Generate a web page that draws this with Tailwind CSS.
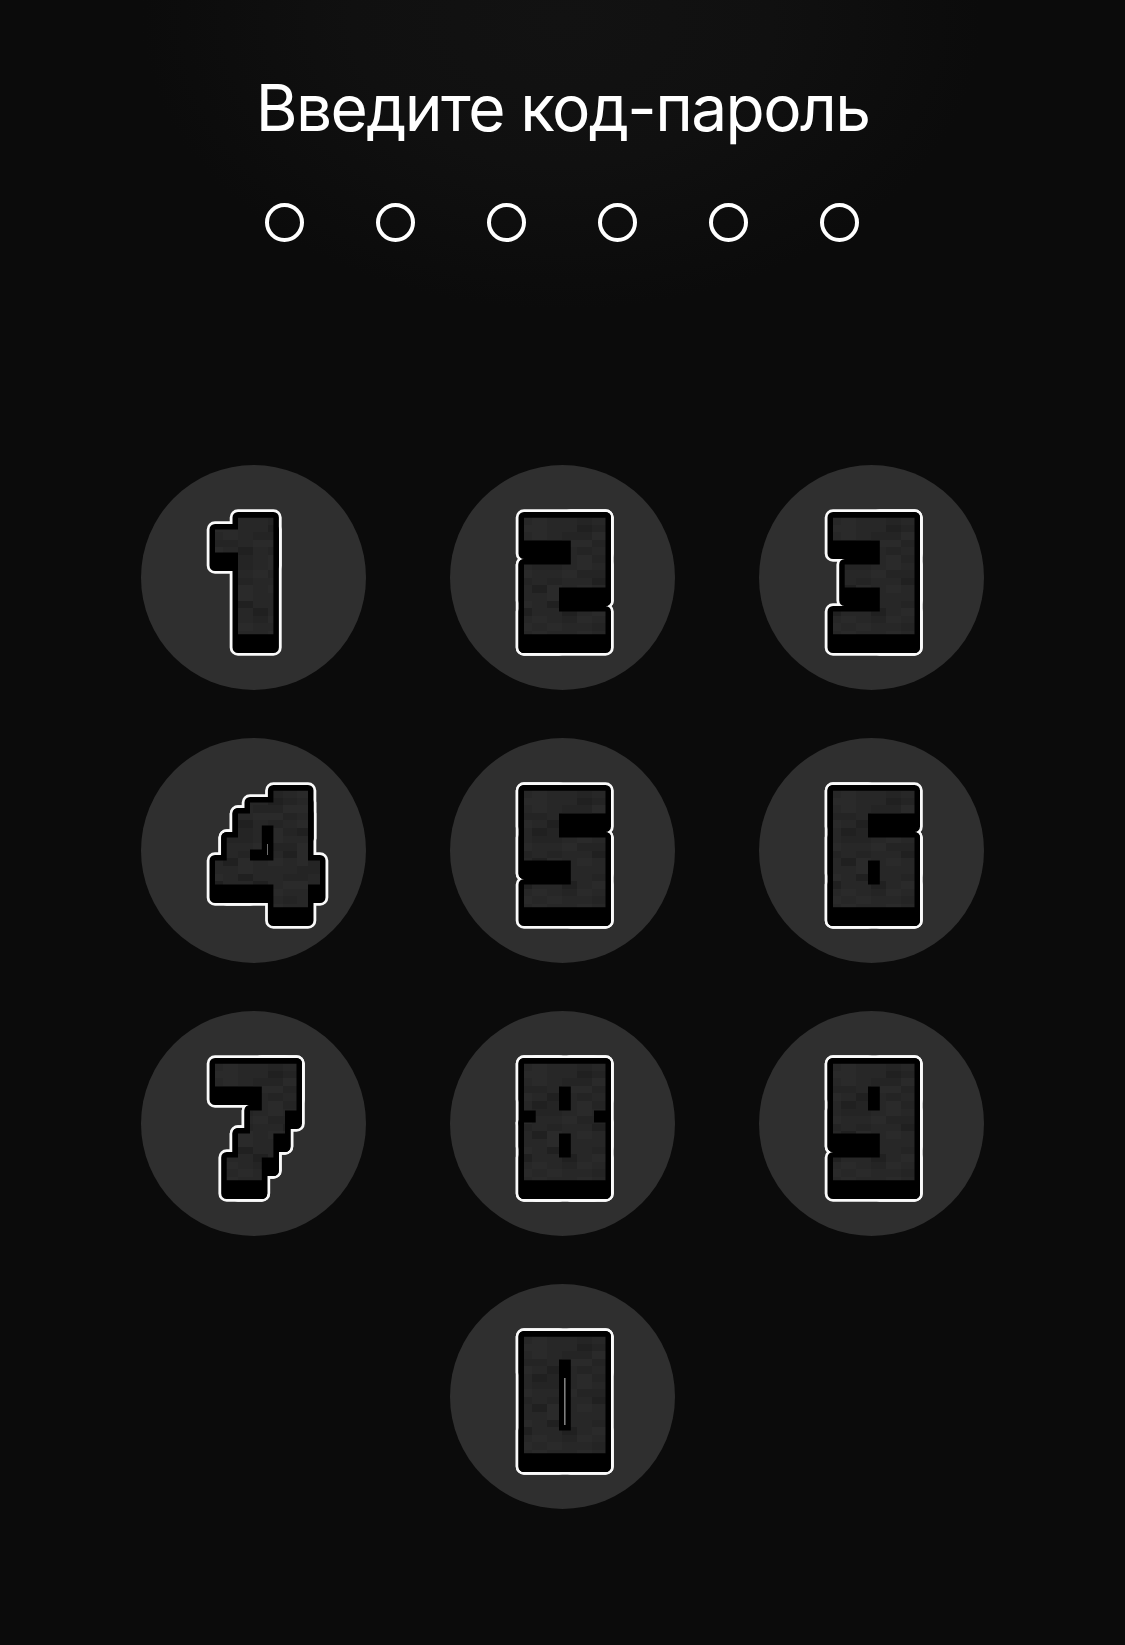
<!DOCTYPE html>
<html lang="ru">
<head>
<meta charset="utf-8">
<title>Введите код-пароль</title>
<script src="https://cdn.jsdelivr.net/npm/@tailwindcss/browser@4"></script>
</head>
<body class="min-h-screen bg-[#0b0b0b] font-['Inter',sans-serif] text-white">
<main class="flex min-h-[1645px] flex-col items-center bg-[radial-gradient(ellipse_420px_290px_at_562px_20px,#121212_0%,#101010_50%,#0b0b0b_100%)] bg-no-repeat pt-[68px]">
  <h1 id="title" class="h-20 whitespace-nowrap text-[64px] leading-20 font-normal tracking-[-1.6px]">Введите код-пароль</h1>
  <div class="mt-[55px] mr-px flex gap-[72px]">
    <span class="size-[39px] rounded-full border-4 border-white"></span>
    <span class="size-[39px] rounded-full border-4 border-white"></span>
    <span class="size-[39px] rounded-full border-4 border-white"></span>
    <span class="size-[39px] rounded-full border-4 border-white"></span>
    <span class="size-[39px] rounded-full border-4 border-white"></span>
    <span class="size-[39px] rounded-full border-4 border-white"></span>
  </div>
  <div id="keypad" class="mt-[223px] grid grid-cols-3 gap-x-[84px] gap-y-12"></div>
</main>
<script>
// Each digit is a list of blocks on a pixel grid: x, y, width, height.
const digits = {
  1: [[0,1,5,2],[2,0,3,10]],
  2: [[0,0,7,2],[4,0,3,6],[0,4,7,2],[0,4,3,6],[0,8,7,2]],
  3: [[0,0,7,2],[1,4,6,2],[0,8,7,2],[4,0,3,10]],
  4: [[5,0,3,10],[3,1,5,2],[2,2,6,1],[2,2,2,3],[1,4,3,1],[1,4,2,4],[0,6,9,2]],
  5: [[0,0,7,2],[0,0,3,6],[0,4,7,2],[4,4,3,6],[0,8,7,2]],
  6: [[0,0,7,2],[0,0,3,10],[0,4,7,2],[4,4,3,6],[0,8,7,2]],
  7: [[0,0,7,2],[4,0,3,4],[4,0,2,6],[3,4,3,2],[3,4,2,4],[2,6,3,2],[2,6,2,4],[1,8,3,2]],
  8: [[0,0,7,2],[0,0,3,4],[4,0,3,4],[1,0,2,10],[4,0,2,10],[1,4,5,2],[0,5,7,1],[0,5,3,5],[4,5,3,5],[0,8,7,2]],
  9: [[0,0,7,2],[0,0,3,6],[4,0,3,10],[0,4,7,2],[0,8,7,2]],
  0: [[0,0,7,2],[0,0,3,10],[4,0,3,10],[0,8,7,2]],
};
// Pixel positions of the grid lines; DEPTH is the height of the black front side.
const gx = [0, 11.7, 23, 35, 46.8, 58.4, 70, 81.5, 93, 105];
const gy = [0, 12, 23, 35, 47, 59, 70, 82, 94, 105, 117];
const DEPTH = 13;
// Stone texture: d = dark, D = darker, l = light.
const stone = ['.l..d.ld','ll..Dd.l','.l.ddlll','dd.lld..','l.D.d.ll','.Dd.ldDd','.dd.l..l','l..lddl.','d.d..Dl.','.Dl.l.ld','..l...dd','l.D..dd.','D..D.ll.','.l.dl..l','l.l..d.l','.l..l...'];
const shade = {'.':'#272727', l:'#2a2a2a', d:'#242424', D:'#202020'};
const cx = [0, 9, 24, 39, 54, 69, 83, 94, 107];
const cy = r => Math.round(r * 7.6);
let texture = '';
stone.forEach((row, r) => [...row].forEach((c, i) => {
  texture += `<rect x="${cx[i]-1}" y="${cy(r)-0.5}" width="${cx[i+1]-cx[i]}" height="${cy(r+1)-cy(r)}" fill="${shade[c]}"/>`;
}));
const blocks = (d, extra) => digits[d].map(([x,y,w,h]) =>
  `<rect x="${gx[x]}" y="${gy[y]}" width="${gx[x+w]-gx[x]}" height="${gy[y+h]-gy[y]+extra}"/>`).join('');
const key = d => `<button aria-label="${d}" class="size-[225px] rounded-full bg-[#2f2f2f] last:col-start-2">
  <svg class="size-[225px]" viewBox="0 0 225 225"><defs><clipPath id="face${d}">${blocks(d, 0)}</clipPath></defs>
  <g transform="translate(74 52.5)" stroke-linejoin="round">
  <g fill="#fafafa" stroke="#fafafa" stroke-width="16.6">${blocks(d, DEPTH)}</g>
  <g fill="#000" stroke="#000" stroke-width="11">${blocks(d, DEPTH)}</g>
  <g clip-path="url(#face${d})">${texture}</g></g></svg></button>`;
document.getElementById('keypad').innerHTML = [1,2,3,4,5,6,7,8,9,0].map(key).join('');
</script>
</body>
</html>
